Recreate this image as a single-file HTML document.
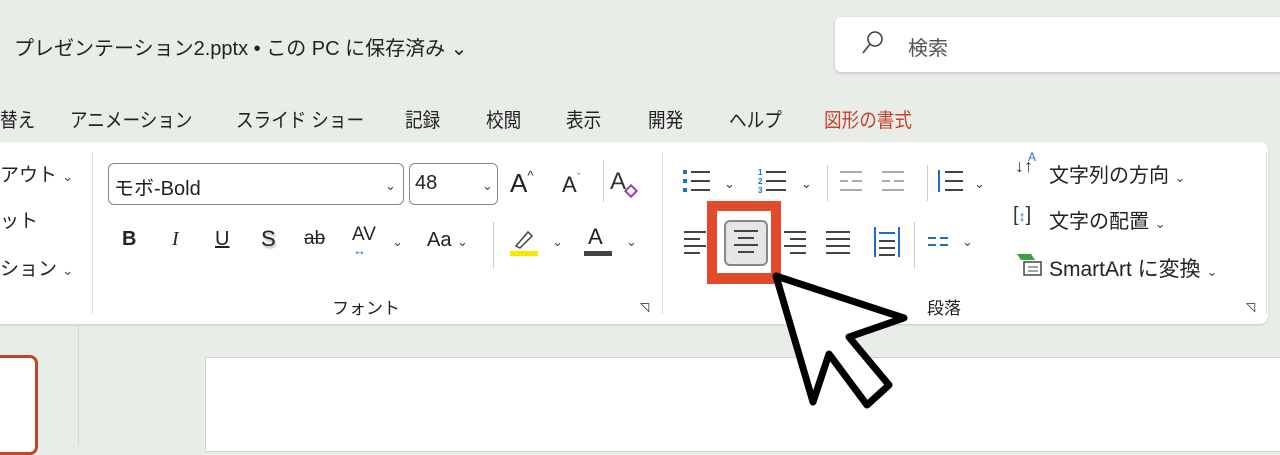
<!DOCTYPE html>
<html><head><meta charset="utf-8"><style>
*{margin:0;padding:0;box-sizing:border-box}
body{width:1280px;height:446px;overflow:hidden;background:#e9ede8;font-family:"Liberation Sans","Noto Sans CJK JP",sans-serif;color:#222;position:relative}
.a{position:absolute;white-space:nowrap}
.r{font-size:20px;transform:scaleX(0.88);transform-origin:left top}
.chev{font-size:13px;color:#444}
.ln{position:absolute;height:2px;background:#444}
</style></head><body>
<div class="a" style="left:14px;top:32px;font-size:20px">プレゼンテーション2.pptx • この PC に保存済み ⌄</div>
<div class="a" style="left:835px;top:17px;width:460px;height:55px;background:#fff;border-radius:6px;box-shadow:0 1px 3px rgba(0,0,0,.2)"></div>
<svg class="a" style="left:860px;top:30px" width="24" height="26"><circle cx="15" cy="9" r="7" fill="none" stroke="#444" stroke-width="1.6"/><line x1="10" y1="14" x2="3" y2="23" stroke="#444" stroke-width="1.6"/></svg>
<div class="a" style="left:908px;top:32px;font-size:20px;color:#555">検索</div>

<div class="a r" style="left:0;top:104px">替え</div>
<div class="a r" style="left:70px;top:104px">アニメーション</div>
<div class="a r" style="left:236px;top:104px">スライド ショー</div>
<div class="a r" style="left:405px;top:104px">記録</div>
<div class="a r" style="left:486px;top:104px">校閲</div>
<div class="a r" style="left:566px;top:104px">表示</div>
<div class="a r" style="left:648px;top:104px">開発</div>
<div class="a r" style="left:729px;top:104px">ヘルプ</div>
<div class="a r" style="left:824px;top:104px;color:#c4432b">図形の書式</div>

<div class="a" style="left:-10px;top:142px;width:1278px;height:182px;background:#fff;border-radius:8px;box-shadow:0 1px 2px rgba(0,0,0,.15)"></div>
<div class="a" style="left:0;top:160px;font-size:19px">アウト <span class="chev">⌄</span></div>
<div class="a" style="left:0;top:206px;font-size:19px">ット</div>
<div class="a" style="left:0;top:254px;font-size:19px">ション <span class="chev">⌄</span></div>
<div class="a" style="left:92px;top:152px;width:1px;height:162px;background:#ddd"></div>

<div class="a" style="left:108px;top:163px;width:296px;height:42px;border:1px solid #888;border-radius:6px"></div>
<div class="a" style="left:114px;top:172px;font-size:20px">モボ-Bold</div>
<div class="a chev" style="left:385px;top:178px">⌄</div>
<div class="a" style="left:409px;top:163px;width:89px;height:42px;border:1px solid #888;border-radius:6px"></div>
<div class="a" style="left:415px;top:172px;font-size:20px">48</div>
<div class="a chev" style="left:482px;top:178px">⌄</div>
<div class="a" style="left:510px;top:168px;font-size:26px">A<span style="font-size:13px;vertical-align:top">^</span></div>
<div class="a" style="left:562px;top:172px;font-size:22px">A<span style="font-size:11px;vertical-align:top;color:#1a6fc4">ˇ</span></div>
<div class="a" style="left:603px;top:160px;width:1px;height:42px;background:#ccc"></div>
<div class="a" style="left:610px;top:168px;font-size:24px;color:#333">A</div>
<div class="a" style="left:626px;top:186px;width:10px;height:10px;border:2px solid #a040b0;transform:rotate(45deg)"></div>

<div class="a" style="left:122px;top:228px;font-size:20px;font-weight:bold">B</div>
<div class="a" style="left:172px;top:228px;font-size:20px;font-family:'Liberation Serif',serif;font-style:italic">I</div>
<div class="a" style="left:215px;top:228px;font-size:20px;text-decoration:underline">U</div>
<div class="a" style="left:261px;top:226px;font-size:22px;text-shadow:1px 2px 2px #aaa">S</div>
<div class="a" style="left:304px;top:228px;font-size:19px;text-decoration:line-through">ab</div>
<div class="a" style="left:352px;top:224px;font-size:19px">AV</div>
<div class="a" style="left:353px;top:243px;font-size:13px;color:#1a6fc4">↔</div>
<div class="a chev" style="left:392px;top:234px">⌄</div>
<div class="a" style="left:427px;top:229px;font-size:20px">Aa <span class="chev">⌄</span></div>
<div class="a" style="left:493px;top:222px;width:1px;height:46px;background:#ccc"></div>
<svg class="a" style="left:508px;top:226px" width="32" height="32"><path d="M8 20 L20 6 L24 10 L12 22 Z" fill="none" stroke="#444" stroke-width="1.5"/><rect x="2" y="25" width="28" height="5" fill="#f5e900"/></svg>
<div class="a chev" style="left:552px;top:234px">⌄</div>
<div class="a" style="left:588px;top:224px;font-size:22px">A</div>
<div class="a" style="left:584px;top:251px;width:28px;height:5px;background:#444"></div>
<div class="a chev" style="left:626px;top:234px">⌄</div>
<div class="a" style="left:332px;top:294px;font-size:17px">フォント</div>
<div class="a" style="left:640px;top:300px;font-size:12px">◹</div>
<div class="a" style="left:662px;top:152px;width:1px;height:162px;background:#ddd"></div>

<svg class="a" style="left:680px;top:166px" width="320" height="32">
<g fill="#1a6fc4"><rect x="3" y="4" width="4" height="4"/><rect x="3" y="13" width="4" height="4"/><rect x="3" y="22" width="4" height="4"/></g>
<g stroke="#444" stroke-width="2"><line x1="11" y1="6" x2="30" y2="6"/><line x1="11" y1="15" x2="30" y2="15"/><line x1="11" y1="24" x2="30" y2="24"/></g>
<g fill="#1a6fc4" font-size="8" font-weight="bold"><text x="78" y="9">1</text><text x="78" y="18">2</text><text x="78" y="27">3</text></g>
<g stroke="#444" stroke-width="2"><line x1="86" y1="6" x2="106" y2="6"/><line x1="86" y1="15" x2="106" y2="15"/><line x1="86" y1="24" x2="106" y2="24"/></g>
<g stroke="#aaa" stroke-width="2"><line x1="160" y1="6" x2="182" y2="6"/><line x1="172" y1="15" x2="182" y2="15"/><line x1="160" y1="24" x2="182" y2="24"/><line x1="160" y1="15" x2="168" y2="15"/>
<line x1="202" y1="6" x2="224" y2="6"/><line x1="214" y1="15" x2="224" y2="15"/><line x1="202" y1="24" x2="224" y2="24"/><line x1="202" y1="15" x2="210" y2="15"/></g>
<g stroke="#1a6fc4" stroke-width="2"><line x1="259" y1="4" x2="259" y2="26"/></g>
<g stroke="#444" stroke-width="2"><line x1="265" y1="6" x2="283" y2="6"/><line x1="265" y1="15" x2="283" y2="15"/><line x1="265" y1="24" x2="283" y2="24"/></g>
</svg>
<div class="a chev" style="left:724px;top:176px">⌄</div>
<div class="a chev" style="left:801px;top:176px">⌄</div>
<div class="a chev" style="left:974px;top:176px">⌄</div>
<div class="a" style="left:827px;top:165px;width:1px;height:36px;background:#ccc"></div>
<div class="a" style="left:927px;top:165px;width:1px;height:36px;background:#ccc"></div>

<svg class="a" style="left:680px;top:225px" width="300" height="36">
<g stroke="#444" stroke-width="2">
<line x1="4" y1="7" x2="26" y2="7"/><line x1="4" y1="14" x2="20" y2="14"/><line x1="4" y1="21" x2="26" y2="21"/><line x1="4" y1="28" x2="20" y2="28"/>
<line x1="104" y1="7" x2="126" y2="7"/><line x1="110" y1="14" x2="126" y2="14"/><line x1="104" y1="21" x2="126" y2="21"/><line x1="110" y1="28" x2="126" y2="28"/>
<line x1="146" y1="7" x2="170" y2="7"/><line x1="146" y1="14" x2="170" y2="14"/><line x1="146" y1="21" x2="170" y2="21"/><line x1="146" y1="28" x2="170" y2="28"/></g>
<g stroke="#1a6fc4" stroke-width="2"><line x1="195" y1="2" x2="195" y2="32"/><line x1="219" y1="2" x2="219" y2="32"/><line x1="199" y1="8" x2="215" y2="8"/></g>
<g stroke="#444" stroke-width="2"><line x1="199" y1="16" x2="215" y2="16"/><line x1="199" y1="23" x2="215" y2="23"/><line x1="199" y1="30" x2="215" y2="30"/></g>
<g stroke="#1a6fc4" stroke-width="2"><line x1="248" y1="13" x2="256" y2="13"/><line x1="248" y1="20" x2="256" y2="20"/><line x1="260" y1="13" x2="268" y2="13"/><line x1="260" y1="20" x2="268" y2="20"/></g>
</svg>
<div class="a" style="left:914px;top:222px;width:1px;height:46px;background:#ccc"></div>
<div class="a chev" style="left:962px;top:234px">⌄</div>

<div class="a" style="left:707px;top:201px;width:74px;height:83px;background:#e24a2e"></div>
<div class="a" style="left:717px;top:211px;width:54px;height:62px;background:#fff"></div>
<div class="a" style="left:724px;top:220px;width:44px;height:46px;background:#e6e6e6;border:2px solid #888;border-radius:6px"></div>
<div class="ln" style="left:734px;top:230px;width:24px"></div>
<div class="ln" style="left:738px;top:237px;width:16px"></div>
<div class="ln" style="left:734px;top:244px;width:24px"></div>
<div class="ln" style="left:738px;top:251px;width:16px"></div>

<div class="a" style="left:1015px;top:156px;font-size:18px;color:#333">↓↑</div>
<div class="a" style="left:1028px;top:150px;font-size:12px;color:#1a6fc4">A</div>
<div class="a" style="left:1049px;top:159px;font-size:20px">文字列の方向 <span class="chev">⌄</span></div>
<div class="a" style="left:1013px;top:204px;font-size:20px;color:#333">[<span style="color:#1a6fc4;font-size:14px">↕</span>]</div>
<div class="a" style="left:1049px;top:205px;font-size:20px">文字の配置 <span class="chev">⌄</span></div>
<svg class="a" style="left:1016px;top:252px" width="28" height="26"><path d="M1 2 H15 L19 8 H5 Z" fill="#3aa04a"/><rect x="8" y="10" width="17" height="13" fill="#fff" stroke="#444" stroke-width="1.5"/><line x1="12" y1="15" x2="22" y2="15" stroke="#444"/><line x1="12" y1="19" x2="22" y2="19" stroke="#444"/></svg>
<div class="a" style="left:1049px;top:253px;font-size:21px">SmartArt に変換 <span class="chev">⌄</span></div>
<div class="a" style="left:927px;top:294px;font-size:17px">段落</div>
<div class="a" style="left:1246px;top:300px;font-size:12px">◹</div>
<div class="a" style="left:1266px;top:152px;width:1px;height:162px;background:#ddd"></div>

<div class="a" style="left:78px;top:324px;width:1px;height:122px;background:#d6dad6"></div>
<div class="a" style="left:-10px;top:355px;width:48px;height:100px;border:3px solid #c4432b;border-radius:8px;background:#fff"></div>
<div class="a" style="left:205px;top:357px;width:1080px;height:95px;background:#fff;border:1px solid #d0d0d0"></div>

<svg class="a" style="left:0;top:0" width="1280" height="446"><polygon points="776,276 813,402 829,354 867,405 889,385 849,337 904,318" fill="#fff" stroke="#000" stroke-width="7" stroke-linejoin="round"/></svg>
</body></html>
